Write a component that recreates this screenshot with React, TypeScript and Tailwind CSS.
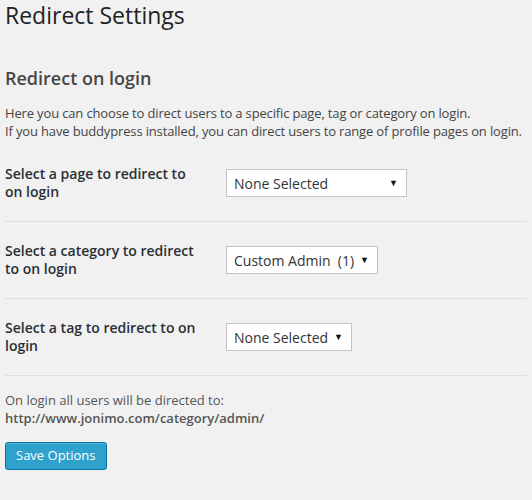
import { useState } from "react";

interface Row {
  label: string;
  value: string;
  width: string;
}

const rows: Row[] = [
  { label: "Select a page to redirect to on login", value: "None Selected", width: "w-[181px]" },
  { label: "Select a category to redirect to on login", value: "Custom Admin\u00a0\u00a0(1)", width: "w-[152px]" },
  { label: "Select a tag to redirect to on login", value: "None Selected", width: "w-[126px]" },
];

function FakeSelect({ value, width }: { value: string; width: string }) {
  return (
    <div
      className={`${width} h-[28px] bg-white border border-[#c4c4c4] flex items-center justify-between pl-[7px] pr-[8px] text-[14px] text-[#333]`}
    >
      <span className="whitespace-nowrap">{value}</span>
      <span className="text-[9px] text-[#111]">▼</span>
    </div>
  );
}

export default function App() {
  const [saved, setSaved] = useState(false);

  return (
    <div className="min-h-[500px] w-full bg-[#f1f1f1] font-['Open_Sans',sans-serif] px-[5px] pt-[1px]">
      <h2 className="text-[23px] leading-[29px] text-[#222] font-normal">Redirect Settings</h2>

      <h3 className="mt-[36px] text-[18px] leading-[24px] font-semibold text-[#464646]">
        Redirect on login
      </h3>

      <p className="mt-[14px] text-[13px] leading-[18px] text-[#444] whitespace-nowrap tracking-[-0.15px]">
        Here you can choose to direct users to a specific page, tag or category on login.
        <br />
        If you have buddypress installed, you can direct users to range of profile pages on login.
      </p>

      <div className="mt-[5px]">
        {rows.map((row) => (
          <div key={row.label} className="flex items-center border-b border-[#dedede] h-[77px]">
            <div className="w-[210px] pr-[10px] text-[14px] leading-[18px] font-semibold text-[#2a2f34]">
              {row.label}
            </div>
            <div className="pl-[11px]">
              <FakeSelect value={row.value} width={row.width} />
            </div>
          </div>
        ))}
      </div>

      <p className="mt-[15px] text-[13px] leading-[18px] text-[#555]">
        On login all users will be directed to:
        <br />
        <span className="font-semibold">http://www.jonimo.com/category/admin/</span>
      </p>

      <button
        onClick={() => setSaved(!saved)}
        className="mt-[15px] h-[28px] px-[10px] rounded-[3px] bg-[#2ea2cc] border border-[#0074a2] text-white text-[13px] shadow-[inset_0_1px_0_rgba(120,200,230,0.5)]"
      >
        Save Options
      </button>
    </div>
  );
}
